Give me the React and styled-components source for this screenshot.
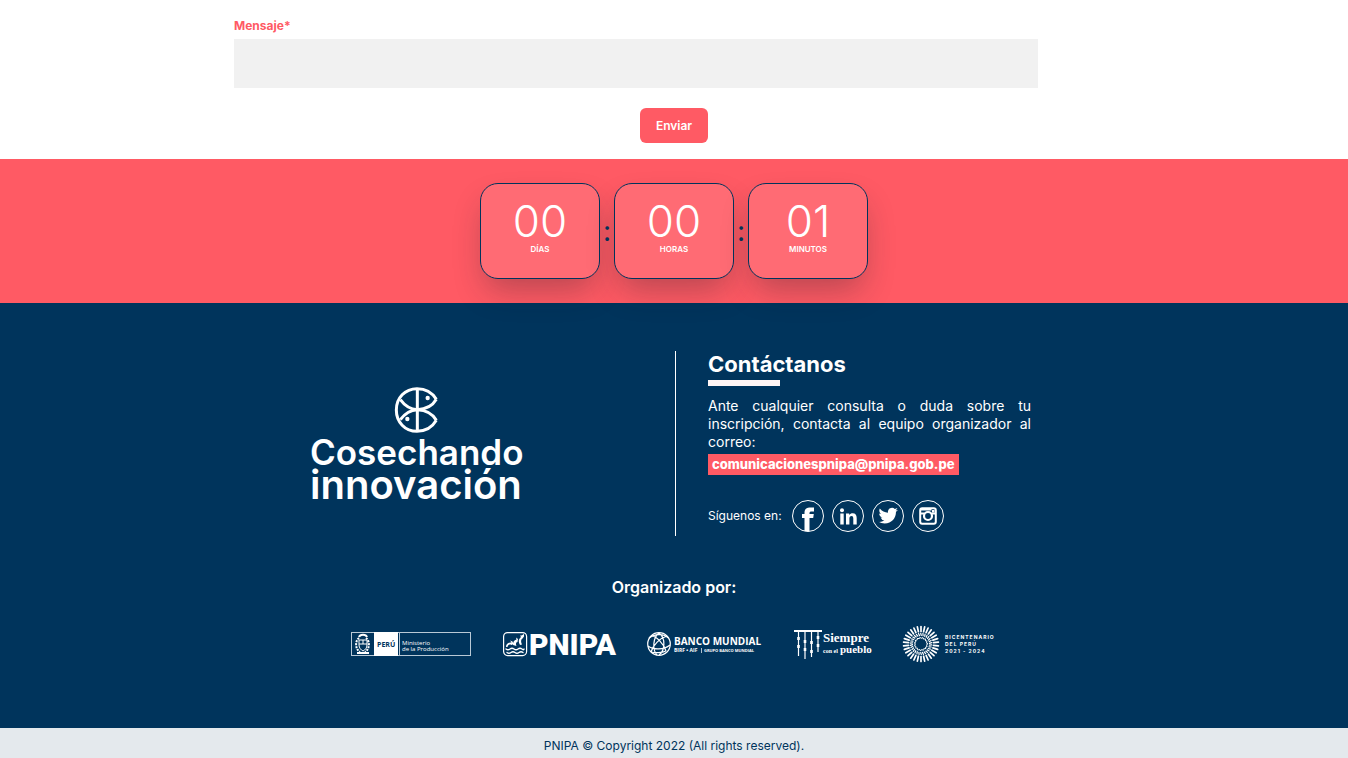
import React from "react";
import styled, { createGlobalStyle } from "styled-components";

const coral = "#ff5a64";
const navy = "#00345c";

const GlobalStyle = createGlobalStyle`
  *, *::before, *::after { box-sizing: border-box; }
  body {
    margin: 0;
    background: #fff;
    color: #fff;
    font-family: Inter, "Open Sans", sans-serif;
    font-size: 14px;
    line-height: 18px;
  }
  h2, h3, p { margin: 0; }
`;

const Form = styled.form`
  display: flex;
  flex-direction: column;
  align-items: center;
  max-width: 880px;
  margin: 0 auto;
  padding: 16px 0;
`;

const Field = styled.div`
  align-self: stretch;
  display: flex;
  flex-direction: column;
  gap: 4px;
  padding-right: 76px;
  margin-bottom: 20px;
`;

const Label = styled.label`
  color: ${coral};
  font-size: 12px;
  font-weight: 700;
  line-height: 19px;
`;

const Message = styled.textarea`
  display: block;
  width: 100%;
  height: 49px;
  padding: 8px;
  border: 0;
  background: #f1f1f1;
  font: inherit;
  color: ${navy};
  resize: none;
`;

const SubmitButton = styled.button`
  height: 35px;
  padding: 0 16px;
  border: 0;
  border-radius: 6px;
  background: ${coral};
  color: #fff;
  font-family: inherit;
  font-size: 12px;
  font-weight: 600;
  cursor: pointer;
`;

const Countdown = styled.section`
  position: relative;
  display: flex;
  justify-content: center;
  align-items: center;
  padding: 24px 0;
  background: ${coral};
`;

const TimeCard = styled.div`
  display: flex;
  flex-direction: column;
  align-items: center;
  width: 120px;
  height: 96px;
  padding-top: 14px;
  border: 1px solid ${navy};
  border-radius: 18px;
  background: #ff6b74;
  box-shadow: 0 16px 32px -6px rgba(30, 30, 40, 0.32);
`;

const TimeValue = styled.span`
  font-size: 44px;
  font-weight: 300;
  line-height: 46px;
`;

const TimeUnit = styled.span`
  font-size: 8px;
  font-weight: 600;
  line-height: 10px;
`;

const Colon = styled.span`
  width: 14px;
  color: ${navy};
  font-size: 28px;
  font-weight: 400;
  line-height: 28px;
  text-align: center;
`;

const Footer = styled.footer`
  padding: 48px 16px 65px;
  background: ${navy};
`;

const Columns = styled.div`
  display: grid;
  grid-template-columns: 365px 1fr;
  max-width: 728px;
  margin: 0 auto;
`;

const Brand = styled.div`
  display: flex;
  flex-direction: column;
  justify-content: center;
  align-items: flex-start;
`;

const BrandLogo = styled.svg`
  display: block;
  width: 220px;
  height: 116px;
  overflow: visible;
`;

const Contact = styled.div`
  display: flex;
  flex-direction: column;
  align-items: flex-start;
  min-height: 185px;
  padding: 0 7px 4px 32px;
  border-left: 1px solid #fff;
`;

const ContactTitle = styled.h2`
  font-size: 22px;
  font-weight: 700;
  line-height: 26px;
  &::after {
    content: "";
    display: block;
    width: 72px;
    height: 6px;
    margin-top: 3px;
    background: #fff5f5;
  }
`;

const ContactText = styled.p`
  margin-top: 11px;
  font-size: 14px;
  line-height: 18px;
  text-align: justify;
`;

const MailLink = styled.a`
  margin-top: 3px;
  padding: 0 4px;
  background: ${coral};
  color: #fff;
  font-size: 13px;
  font-weight: 800;
  line-height: 21px;
  text-decoration: none;
`;

const Social = styled.div`
  display: flex;
  align-items: center;
  gap: 8px;
  margin-top: auto;
  font-size: 12px;
`;

const SocialText = styled.span`
  margin-right: 2px;
`;

const SocialLink = styled.a`
  display: block;
  width: 32px;
  height: 32px;
  color: #fff;
  svg { display: block; width: 32px; height: 32px; }
`;

const OrganizedBy = styled.h3`
  margin-top: 41px;
  font-size: 16px;
  font-weight: 600;
  line-height: 20px;
  text-align: center;
`;

const Sponsors = styled.div`
  display: flex;
  flex-wrap: wrap;
  justify-content: center;
  align-items: center;
  gap: 32px;
  margin-top: 28px;
`;

const Sponsor = styled.svg`
  display: block;
  width: ${(p) => p.$width}px;
  height: 38px;
  overflow: visible;
`;

const Copyright = styled.div`
  padding: 9px 16px 3px;
  background: #e4e9ed;
  color: ${navy};
  font-size: 12px;
  text-align: center;
`;

function CosechandoLogo() {
  return (
    <BrandLogo viewBox="0 0 220 116" role="img" aria-label="Cosechando innovación">
      <g transform="translate(-10 -11) scale(0.33333)" fill="none" stroke="#fff" strokeWidth="9" strokeLinejoin="round">
        <path d="M409 73C396 51 377 41 351 41C315 41 289 69 289 105C289 141 315 169 351 169C377 169 396 158 409 136" />
        <path d="M301 74C314 92 331 103 352 104C378 103 397 94 409 73" />
        <path d="M301 134C314 116 331 105 352 104C378 105 397 114 409 136" />
        <path d="M352 40V170" />
        <g fill="#fff" stroke="none">
          <circle cx="383" cy="69" r="6.5" />
          <circle cx="322" cy="132" r="6.5" />
        </g>
      </g>
      <g fill="#fff" fontFamily="Inter, sans-serif" fontWeight="600">
        <text x="0" y="79" fontSize="35">Cosechando</text>
        <text x="0" y="113" fontSize="40">innovación</text>
      </g>
    </BrandLogo>
  );
}

const ring = <circle cx="16" cy="16" r="15.5" fill="none" stroke="currentColor" />;

const networks = [
  {
    name: "Facebook",
    icon: <path d="M12.500 31.300V18H10v-4h2.500v-1.500c0-3.300 1.900-5 5-5H22v4h-2.300c-1.700 0-2.200.5-2.200 1.700v.8h4.300l-.6 4h-3.700v13.300z" fill="currentColor" />,
  },
  {
    name: "LinkedIn",
    icon: (
      <g fill="currentColor">
        <circle cx="10" cy="10.200" r="2" />
        <path d="M8.300 13.500h3.400v11H8.300zM14 13.500h3.200V15c.8-1.200 2-1.800 3.500-1.800 2.700 0 4 1.700 4 4.700v6.600h-3.400v-6c0-1.700-.6-2.500-1.800-2.500-1.400 0-2.100 1-2.100 2.600v5.900H14z" />
      </g>
    ),
  },
  {
    name: "Twitter",
    icon: (
      <g transform="translate(6.500 6) scale(0.81)">
        <path
          fill="currentColor"
          d="M23.950 4.570a10 10 0 0 1-2.820.77 4.960 4.960 0 0 0 2.160-2.720c-.95.550-2 .95-3.130 1.180A4.920 4.920 0 0 0 11.780 8.300C7.690 8.090 4.070 6.130 1.640 3.160a4.820 4.820 0 0 0-.67 2.480c0 1.710.87 3.210 2.190 4.100a4.900 4.900 0 0 1-2.230-.62v.06a4.920 4.920 0 0 0 3.950 4.830 4.960 4.960 0 0 1-2.210.08 4.940 4.940 0 0 0 4.600 3.420A9.870 9.870 0 0 1 0 19.540a13.990 13.990 0 0 0 7.550 2.210c9.050 0 14-7.500 14-13.980 0-.21 0-.42-.02-.63a9.940 9.940 0 0 0 2.420-2.570z"
        />
      </g>
    ),
  },
  {
    name: "Instagram",
    icon: (
      <g>
        <rect x="8.200" y="8.200" width="15.600" height="15.600" rx="2" fill="none" stroke="currentColor" strokeWidth="2" />
        <path d="M8 12.500h4.500v2H8zM19.500 12.500H24v2h-4.500zM8 8h11.500v2.500H8z" fill="currentColor" />
        <circle cx="16" cy="16" r="4" fill="none" stroke="currentColor" strokeWidth="2.200" />
        <rect x="20" y="10" width="2.500" height="2.500" fill="currentColor" />
      </g>
    ),
  },
];

function MinisterioLogo() {
  return (
    <Sponsor $width={120} viewBox="0 0 120 38" role="img" aria-label="Perú, Ministerio de la Producción">
      <rect x=".5" y="7.500" width="119" height="23" fill="none" stroke="#b9c9d6" />
      <rect x="23" y="7" width="24" height="24" fill="#fff" />
      <path d="M48.500 7v24" stroke="#b9c9d6" />
      <g fill="none" stroke="#fff">
        <path d="M8 13c-4 3-4 11 1 14M15 13c4 3 4 11-1 14" strokeWidth="2" strokeDasharray="2 1" />
        <path d="M8 15h8v5c0 3-2 5-4 6-2-1-4-3-4-6zM8 19h8M12 15v4" />
        <path d="M8 12c1-3 7-3 8 0M6 28h12" strokeWidth="2" />
      </g>
      <text x="26" y="22" fill={navy} fontFamily="Open Sans, sans-serif" fontSize="7" fontWeight="700">PERÚ</text>
      <g fill="#fff" fontFamily="Open Sans, sans-serif" fontSize="6">
        <text x="51" y="20">Ministerio</text>
        <text x="51" y="26">de la Producción</text>
      </g>
    </Sponsor>
  );
}

function PnipaLogo() {
  return (
    <Sponsor $width={112} viewBox="0 0 112 38" role="img" aria-label="PNIPA">
      <rect x=".6" y="7.600" width="23" height="23" rx="4" fill="none" stroke="#fff" strokeWidth="1.200" />
      <g fill="none" stroke="#fff" strokeWidth="1.300" strokeLinecap="round">
        <path d="M3 24q2 1.500 4 0t4 0 4 0 4 0 2 0M4 27.500q2 1.500 4 0t4 0 4 0 4 0" />
      </g>
      <g fill="#fff">
        <path d="M3 22c0-3 2-5 5.500-4.500l-1.500-2 2.500 1 1 2.500-2 1C6 19 5 20 4.500 22zM10 20c0-3 1-5 3.500-5.500l-.5-2 2 1.500-.5 3C13 17 12.500 19 13.500 21zM17 20c-2-3-1.500-6 1-8l-1-1.500c2 0 3-.5 4-2v3l-1.500 2c-1.500 1-2 3-.5 6z" />
      </g>
      <text x="26" y="30" fill="#fff" fontFamily="Roboto, sans-serif" fontSize="30" fontWeight="900">PNIPA</text>
    </Sponsor>
  );
}

function BancoLogo() {
  return (
    <Sponsor $width={115} viewBox="0 0 115 38" role="img" aria-label="Banco Mundial">
      <g fill="none" stroke="#fff" strokeWidth="1.200">
        <circle cx="12" cy="19" r="11.300" />
        <path d="M2 13c5-4 15-5 19 0M1 21c5 4 16 4 22-1M4 27c4 1 11 1 15-1M12 8c-6 4-7 17-2 22M12 8c7 5 6 18 0 22M5 11c4 0 12 8 14 15M20 11c-7 2-14 9-16 16" />
      </g>
      <g fill="#fff" fontFamily="Open Sans, sans-serif">
        <text x="27" y="20" fontSize="10" fontWeight="700">BANCO MUNDIAL</text>
        <text x="27" y="27" fontSize="5" fontWeight="700">BIRF • AIF</text>
        <text x="57" y="27" fontSize="4" fontWeight="700">GRUPO BANCO MUNDIAL</text>
      </g>
      <path d="M54.500 23v5" stroke="#fff" strokeWidth=".7" />
    </Sponsor>
  );
}

function SiempreLogo() {
  return (
    <Sponsor $width={77} viewBox="0 0 77 38" role="img" aria-label="Siempre con el pueblo">
      <path d="M0 5h28v2H0z" fill="#fff" />
      <g fill="none" stroke="#fff" strokeWidth="1.200">
        <path d="M4.500 7v24M11 7v27M17.500 7v25M24 7v20" />
        <path d="M4.500 12v3M4.500 20v3M11 15v3M11 23v3M17.500 16v3M17.500 25v3M24 11v3M24 19v3" strokeWidth="2.600" />
      </g>
      <g fill="#fff" fontFamily="Liberation Serif, serif" fontWeight="700">
        <text x="29" y="17" fontSize="13">Siempre</text>
        <text x="29" y="28" fontSize="6">con el</text>
        <text x="46" y="28" fontSize="11">pueblo</text>
      </g>
    </Sponsor>
  );
}

const rays = Array.from({ length: 30 }, (_, i) => i * 12);

function BicentenarioLogo() {
  return (
    <Sponsor $width={94} viewBox="0 0 94 38" role="img" aria-label="Bicentenario del Perú 2021 - 2024">
      <g stroke="#fff" strokeLinecap="round">
        {rays.map((angle) => (
          <g key={angle} transform={`rotate(${angle} 18 19)`}>
            <path d="M18 1.500v5" strokeWidth="1.700" />
            <path d="M17.700 8.300l.6 2.200" strokeWidth="1.200" />
            {angle % 24 === 0 && <path d="M16.800 12.500l2 .8" strokeWidth="1" />}
          </g>
        ))}
      </g>
      <g fill="#fff" fontFamily="Inter, sans-serif" fontSize="5" fontWeight="700" letterSpacing="1">
        <text x="42" y="14">BICENTENARIO</text>
        <text x="42" y="21">DEL PERÚ</text>
        <text x="42" y="28">2021 - 2024</text>
      </g>
    </Sponsor>
  );
}

const units = [
  { value: "00", unit: "DÍAS" },
  { value: "00", unit: "HORAS" },
  { value: "01", unit: "MINUTOS" },
];

export default function App() {
  return (
    <>
      <GlobalStyle />
      <main>
        <Form onSubmit={(e) => e.preventDefault()}>
          <Field>
            <Label htmlFor="mensaje">Mensaje*</Label>
            <Message id="mensaje" name="mensaje" required />
          </Field>
          <SubmitButton type="submit">Enviar</SubmitButton>
        </Form>
        <Countdown>
          {units.map(({ value, unit }, i) => (
            <React.Fragment key={unit}>
              {i > 0 && <Colon>:</Colon>}
              <TimeCard>
                <TimeValue>{value}</TimeValue>
                <TimeUnit>{unit}</TimeUnit>
              </TimeCard>
            </React.Fragment>
          ))}
        </Countdown>
      </main>
      <Footer>
        <Columns>
          <Brand>
            <CosechandoLogo />
          </Brand>
          <Contact>
            <ContactTitle>Contáctanos</ContactTitle>
            <ContactText>
              Ante cualquier consulta o duda sobre tu inscripción, contacta al equipo organizador al correo:
            </ContactText>
            <MailLink href="mailto:comunicacionespnipa@pnipa.gob.pe">comunicacionespnipa@pnipa.gob.pe</MailLink>
            <Social>
              <SocialText>Síguenos en:</SocialText>
              {networks.map(({ name, icon }) => (
                <SocialLink key={name} href="#" aria-label={name}>
                  <svg viewBox="0 0 32 32" aria-hidden="true">
                    {ring}
                    {icon}
                  </svg>
                </SocialLink>
              ))}
            </Social>
          </Contact>
        </Columns>
        <OrganizedBy>Organizado por:</OrganizedBy>
        <Sponsors>
          <MinisterioLogo />
          <PnipaLogo />
          <BancoLogo />
          <SiempreLogo />
          <BicentenarioLogo />
        </Sponsors>
      </Footer>
      <Copyright>PNIPA © Copyright 2022 (All rights reserved).</Copyright>
    </>
  );
}
